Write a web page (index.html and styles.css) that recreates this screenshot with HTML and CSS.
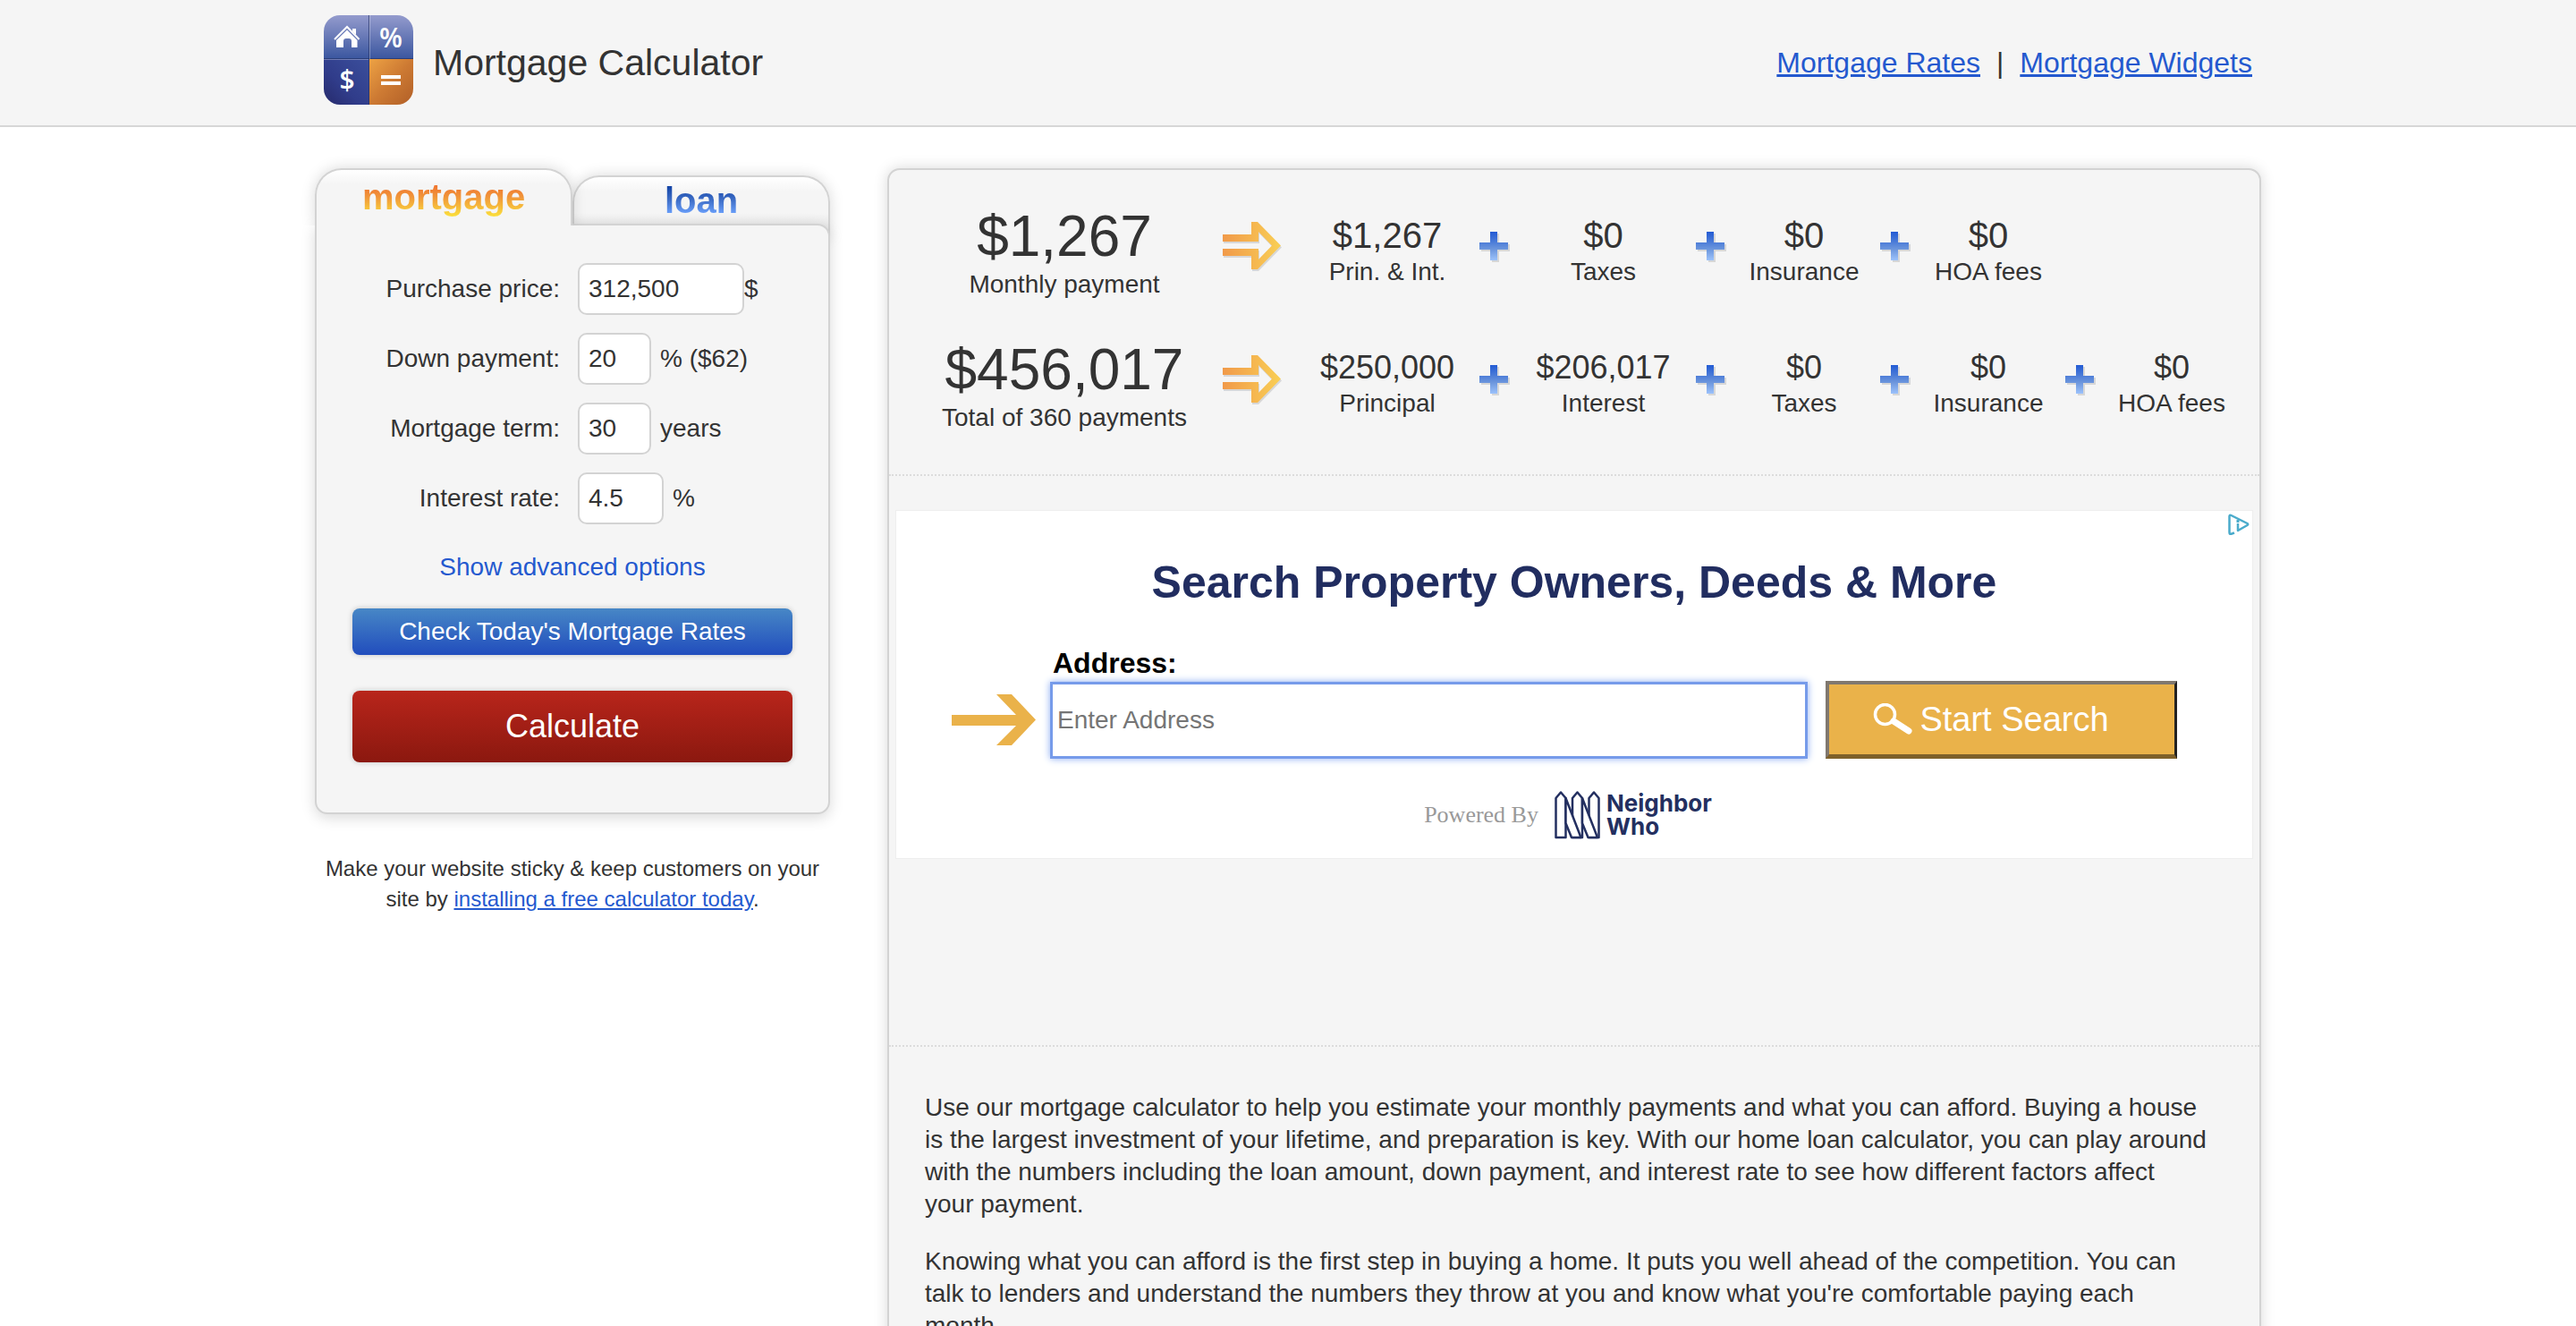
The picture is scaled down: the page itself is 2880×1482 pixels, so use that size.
FILE: index.html
```html
<!DOCTYPE html>
<html lang="en">
<head>
<meta charset="utf-8">
<meta name="viewport" content="width=device-width, initial-scale=1">
<title>Mortgage Calculator</title>
<link rel="stylesheet" href="styles.css">
</head>
<body>
<svg class="sprite" width="0" height="0" aria-hidden="true">
  <defs>
    <linearGradient id="arrow-fill" x1="0" x2="1" y1="0" y2="0">
      <stop offset="0" stop-color="#f19a4a"/><stop offset="1" stop-color="#f9cf55"/>
    </linearGradient>
    <linearGradient id="plus-fill" x1="0" x2="0" y1="0" y2="1">
      <stop offset="0" stop-color="#235bd4"/><stop offset=".35" stop-color="#4a7bd8"/><stop offset=".6" stop-color="#6b95dc"/><stop offset="1" stop-color="#9cc2fb"/>
    </linearGradient>
    <linearGradient id="tile-top" x1="0" x2="0" y1="0" y2="1">
      <stop offset="0" stop-color="#949bcd"/><stop offset="1" stop-color="#3a569f"/>
    </linearGradient>
    <linearGradient id="tile-dark" x1="1" x2="0" y1="0" y2="1">
      <stop offset="0" stop-color="#3b4f9c"/><stop offset=".6" stop-color="#303c8a"/><stop offset="1" stop-color="#262a6b"/>
    </linearGradient>
    <linearGradient id="tile-orange" x1="0" x2="1" y1="0" y2="1">
      <stop offset="0" stop-color="#eda244"/><stop offset=".5" stop-color="#cd7a33"/><stop offset="1" stop-color="#b15f27"/>
    </linearGradient>
    <clipPath id="tile-clip"><rect width="100" height="100" rx="18"/></clipPath>
  </defs>
  <symbol id="arrow" viewBox="0 0 68 56">
    <path d="M0 14H32V0H39L65 26.500 39 53H32V38H0V30H40V42L55 26.500 40 11V22H0Z" fill="#000" opacity=".12" transform="translate(1 2)"/>
    <path d="M0 14H32V0H39L65 26.500 39 53H32V38H0V30H40V42L55 26.500 40 11V22H0Z" fill="url(#arrow-fill)"/>
  </symbol>
  <symbol id="plus" viewBox="0 0 34 36">
    <path d="M12 0H20V12H32V20H20V32H12V20H0V12H12Z" fill="#000" opacity=".12" transform="translate(2 2)"/>
    <path d="M12 0H20V12H32V20H20V32H12V20H0V12H12Z" fill="url(#plus-fill)"/>
  </symbol>
</svg>

<header class="site-header">
  <div class="site-header__inner">
    <a class="brand" href="#">
      <svg class="brand__logo" viewBox="0 0 100 100" aria-hidden="true">
        <g clip-path="url(#tile-clip)">
          <rect width="100" height="49" fill="url(#tile-top)"/>
          <rect y="49" width="51" height="51" fill="url(#tile-dark)"/>
          <rect x="51" y="49" width="49" height="51" fill="url(#tile-orange)"/>
          <path d="M50.500 0V100M0 48.500H100" stroke="#253368" stroke-opacity=".7" fill="none"/>
          <path d="M51.500 0V49M0 49.500H50" stroke="#fff" stroke-opacity=".3" fill="none"/>
        </g>
        <path d="M12 27 26 13 39.500 27" fill="none" stroke="#fff" stroke-width="2"/>
        <path d="M32 15H36V22L32 18Z" fill="#fff"/>
        <path d="M26 16.500 37.500 28V36H31V29a3 3 0 0 0-3-3h-3a3 3 0 0 0-3 3V36H14V28Z" fill="#fff"/>
        <text class="brand__sign" x="75" y="36" text-anchor="middle">%</text>
        <text class="brand__sign" x="26" y="83" text-anchor="middle">$</text>
        <path d="M64 67H86V71H64ZM64 74H86V78H64Z" fill="#fff"/>
      </svg>
      <span>Mortgage Calculator</span>
    </a>
    <nav class="site-nav">
      <a href="#">Mortgage Rates</a>
      <span>|</span>
      <a href="#">Mortgage Widgets</a>
    </nav>
  </div>
</header>

<div class="layout">
  <aside class="sidebar">
    <form class="calculator">
      <div class="tabs">
        <button class="tab tab--active" type="button"><span>mortgage</span></button>
        <button class="tab" type="button"><span>loan</span></button>
      </div>
      <div class="panel">
        <div class="field">
          <label for="price">Purchase price:</label>
          <input class="field__input field__input--wide" id="price" type="text" value="312,500"><span>$</span>
        </div>
        <div class="field">
          <label for="down">Down payment:</label>
          <input class="field__input" id="down" type="text" value="20"><span class="field__unit">% ($62)</span>
        </div>
        <div class="field">
          <label for="term">Mortgage term:</label>
          <input class="field__input" id="term" type="text" value="30"><span class="field__unit">years</span>
        </div>
        <div class="field">
          <label for="rate">Interest rate:</label>
          <input class="field__input field__input--rate" id="rate" type="text" value="4.5"><span class="field__unit">%</span>
        </div>
        <a class="advanced" href="#">Show advanced options</a>
        <button class="btn btn--rates" type="button">Check Today's Mortgage Rates</button>
        <button class="btn btn--calculate" type="button">Calculate</button>
      </div>
    </form>
    <p class="widget-note">Make your website sticky &amp; keep customers on your site by <a href="#">installing a free calculator today</a>.</p>
  </aside>

  <main class="results">
    <section class="summary">
      <div class="summary__row">
        <div class="total"><strong>$1,267</strong><span>Monthly payment</span></div>
        <svg class="icon-arrow"><use href="#arrow"/></svg>
        <div class="part"><strong>$1,267</strong><span>Prin. &amp; Int.</span></div>
        <svg class="icon-plus"><use href="#plus"/></svg>
        <div class="part"><strong>$0</strong><span>Taxes</span></div>
        <svg class="icon-plus"><use href="#plus"/></svg>
        <div class="part"><strong>$0</strong><span>Insurance</span></div>
        <svg class="icon-plus"><use href="#plus"/></svg>
        <div class="part"><strong>$0</strong><span>HOA fees</span></div>
      </div>
      <div class="summary__row summary__row--lifetime">
        <div class="total"><strong>$456,017</strong><span>Total of 360 payments</span></div>
        <svg class="icon-arrow"><use href="#arrow"/></svg>
        <div class="part"><strong>$250,000</strong><span>Principal</span></div>
        <svg class="icon-plus"><use href="#plus"/></svg>
        <div class="part"><strong>$206,017</strong><span>Interest</span></div>
        <svg class="icon-plus"><use href="#plus"/></svg>
        <div class="part"><strong>$0</strong><span>Taxes</span></div>
        <svg class="icon-plus"><use href="#plus"/></svg>
        <div class="part"><strong>$0</strong><span>Insurance</span></div>
        <svg class="icon-plus"><use href="#plus"/></svg>
        <div class="part"><strong>$0</strong><span>HOA fees</span></div>
      </div>
    </section>

    <section class="promo">
      <form class="ad">
        <svg class="ad__choices" viewBox="0 0 24 24" aria-hidden="true">
          <path d="M7 21.500 3 23Q1.500 23 1.500 21V3Q1.500 1 3.500 2L21.500 11Q23 12 21.500 13L11 19V11" fill="none" stroke="#4aabcb" stroke-width="2.500" stroke-linejoin="round"/>
          <path d="M9.500 7H12.500V10H9.500Z" fill="#4aabcb"/>
        </svg>
        <h2 class="ad__title">Search Property Owners, Deeds &amp; More</h2>
        <label class="ad__label" for="address">Address:</label>
        <div class="ad__search">
          <svg class="ad__arrow" viewBox="0 0 94 57" aria-hidden="true"><path d="M0 23H72L50 0H67L94 28.500 67 57H50L72 35H0Z" fill="#eab24a"/></svg>
          <input class="ad__input" id="address" type="text" placeholder="Enter Address">
          <button class="ad__button" type="button">
            <svg viewBox="0 0 44 36" aria-hidden="true"><circle cx="13.500" cy="12.500" r="11" fill="none" stroke="#fff" stroke-width="3.500"/><path d="M23 20 40 31" stroke="#fff" stroke-width="7" stroke-linecap="round"/></svg>
            <span>Start Search</span>
          </button>
        </div>
        <div class="ad__footer">
          <span class="ad__powered">Powered By</span>
          <svg class="ad__mark" viewBox="0 0 52 54" aria-hidden="true">
            <g fill="#fff" stroke="#232f60" stroke-width="2.500" stroke-linejoin="round">
              <path d="M1.500 52V8L7 1.500 12.500 8V52Z"/>
              <path d="M20 52V8L25.500 1.500 31 8V52Z"/>
              <path d="M12.500 8 29.500 52H19L12.500 36Z"/>
              <path d="M38.500 52V8L44 1.500 49.500 8V52Z"/>
              <path d="M31 8 48 52H37.500L31 36Z"/>
            </g>
          </svg>
          <span class="ad__name">Neighbor<br>Who</span>
        </div>
      </form>
    </section>

    <article class="intro">
      <p>Use our mortgage calculator to help you estimate your monthly payments and what you can afford. Buying a house is the largest investment of your lifetime, and preparation is key. With our home loan calculator, you can play around with the numbers including the loan amount, down payment, and interest rate to see how different factors affect your&nbsp;payment.</p>
      <p>Knowing what you can afford is the first step in buying a home. It puts you well ahead of the competition. You can talk to lenders and understand the numbers they throw at you and know what you're comfortable paying each month.</p>
    </article>
  </main>
</div>
</body>
</html>
```
FILE: styles.css
```css
* { box-sizing: border-box; }

body {
  margin: 0;
  background: #fff;
  color: #333;
  font: 28px/36px "Liberation Sans", Arial, Helvetica, sans-serif;
}

a { color: #2459cf; }

input, button { font: inherit; color: inherit; }

.sprite { display: block; }

/* Header */
.site-header {
  background: #f5f5f5;
  border-bottom: 2px solid #d7d7d7;
}

.site-header__inner {
  display: flex;
  align-items: center;
  justify-content: space-between;
  max-width: 2176px;
  height: 140px;
  margin: 0 auto;
  padding: 0 10px 6px;
}

.brand {
  display: flex;
  align-items: center;
  gap: 22px;
  color: #333;
  font-size: 41px;
  line-height: 48px;
  text-decoration: none;
}

.brand span { padding-top: 6px; }

.brand__logo { width: 100px; height: 100px; }

.brand__sign {
  fill: #fff;
  font: 600 30px "Open Sans", sans-serif;
}

.site-nav {
  display: flex;
  gap: 18px;
  padding-top: 6px;
  font-size: 32px;
}

/* Layout */
.layout {
  display: grid;
  grid-template-columns: 576fr 1536fr;
  gap: 64px;
  align-items: start;
  max-width: 2176px;
  margin: 46px auto 0;
}

/* Calculator: the idle tab runs on behind the panel's rounded corner */
.tabs {
  display: grid;
  grid-template-columns: 1fr 1fr;
  align-items: end;
}

.tab {
  height: 70px;
  margin-bottom: -16px;
  padding: 0 0 16px;
  border: 2px solid #d3d3d3;
  border-bottom: 0;
  border-radius: 30px 30px 0 0;
  background: linear-gradient(#fff, #f5f5f5 16px, #f5f5f5 40px, #eaeaea 54px);
  box-shadow: 0 0 16px rgba(0, 0, 0, .15);
  font-size: 40px;
  font-weight: bold;
  line-height: 48px;
}

.tab span {
  display: block;
  background: linear-gradient(#1243a5 8px, #3f6fc8 24px, #6da3ff 40px);
  background-clip: text;
  color: transparent;
}

.tab--active {
  position: relative;
  z-index: 2;
  height: 64px;
  margin-bottom: -2px;
  padding: 0 0 2px;
  background: linear-gradient(#fff, #f5f5f5 16px);
  clip-path: inset(-24px -24px 0 -24px);
}

.tab--active span {
  background: linear-gradient(#f06c2c 8px, #f0953a 24px, #fbe03c 46px);
  background-clip: text;
}

.panel {
  position: relative;
  z-index: 1;
  padding: 42px 40px 56px;
  border: 2px solid #d3d3d3;
  border-radius: 0 14px 14px 14px;
  background: #f5f5f5;
  box-shadow: 0 4px 16px rgba(0, 0, 0, .15);
}

.field {
  display: grid;
  grid-template-columns: 232px auto 1fr;
  align-items: center;
  margin-bottom: 20px;
}

.field label { text-align: right; }

.field__input {
  width: 82px;
  height: 58px;
  margin-left: 20px;
  padding: 0 10px;
  border: 2px solid #d3d3d3;
  border-radius: 10px;
  background: #fff;
}

.field__input--wide { width: 186px; }
.field__input--rate { width: 96px; }
.field__unit { padding-left: 10px; }

.advanced {
  display: block;
  margin: 30px 0 28px;
  text-align: center;
  text-decoration: none;
}

.btn {
  display: block;
  width: 100%;
  padding: 0;
  border: 0;
  border-radius: 8px;
  box-shadow: 0 0 6px rgba(0, 0, 0, .2);
  color: #fff;
}

.btn--rates {
  height: 52px;
  background: linear-gradient(#4787c6, #214dbd);
}

.btn--calculate {
  height: 80px;
  margin-top: 40px;
  background: linear-gradient(#b8251b, #8b180f);
  font-size: 36px;
}

.widget-note {
  margin: 44px 10px;
  font-size: 24px;
  line-height: 34px;
  text-align: center;
}

/* Results */
.results {
  border: 2px solid #d3d3d3;
  border-radius: 14px;
  background: #f5f5f5;
  box-shadow: 0 0 16px rgba(0, 0, 0, .15);
}

.summary {
  padding: 42px 30px 0 54px;
  border-bottom: 2px dotted #dcdcdc;
}

.summary__row {
  display: grid;
  grid-template-columns: 284fr 138fr 162fr 78fr 165fr 75fr 134fr 70fr 138fr 68fr 136fr;
  justify-items: center;
  align-items: start;
  min-height: 149px;
}

.total, .part {
  display: flex;
  flex-direction: column;
  align-items: center;
  white-space: nowrap;
}

.total strong, .part strong { font-weight: normal; }

.total strong {
  margin-bottom: 4px;
  font-size: 64px;
  line-height: 64px;
}

.part { padding-top: 8px; }

.part strong {
  font-size: 40px;
  line-height: 46px;
}

.summary__row--lifetime .part strong {
  font-size: 36px;
  line-height: 44px;
}

.icon-arrow {
  width: 68px;
  height: 56px;
  margin-top: 16px;
}

.icon-plus {
  width: 34px;
  height: 36px;
  margin-top: 27px;
}

/* Advertisement */
.promo {
  min-height: 638px;
  padding: 38px 7px;
  border-bottom: 2px dotted #dcdcdc;
}

.ad {
  position: relative;
  min-height: 390px;
  padding: 50px 84px 0 62px;
  border: 1px solid #eee;
  background: #fff;
}

.ad__choices {
  position: absolute;
  top: 3px;
  right: 3px;
  width: 24px;
  height: 24px;
}

.ad__title {
  margin: 0 -84px 40px -62px;
  color: #212d60;
  font-size: 50px;
  line-height: 60px;
  text-align: center;
}

.ad__label {
  display: block;
  margin-left: 113px;
  color: #000;
  font-size: 32px;
  font-weight: bold;
  line-height: 40px;
}

.ad__search {
  display: flex;
  align-items: center;
}

.ad__arrow { width: 94px; height: 57px; margin-right: 16px; }

.ad__input {
  flex: 1;
  min-width: 0;
  height: 86px;
  padding: 0 5px;
  border: 3px solid #769bea;
  background: #fff;
  box-shadow: 0 0 8px #8aabf2;
}

.ad__input::placeholder { color: #757575; opacity: 1; }

.ad__button {
  display: flex;
  align-items: center;
  justify-content: center;
  gap: 8px;
  width: 393px;
  height: 87px;
  margin-left: 20px;
  padding: 0 24px 0 0;
  border: solid;
  border-width: 4px 3px 5px 4px;
  border-color: #80786f #222 #7f612a #80786f;
  background: #eab24a;
  color: #fff;
  font-size: 38px;
}

.ad__button svg { width: 44px; height: 36px; }

.ad__footer {
  display: flex;
  align-items: center;
  justify-content: center;
  margin: 36px -8px 0 0;
}

.ad__powered {
  margin-right: 18px;
  color: #999;
  font: 26px/32px "Liberation Serif", "Times New Roman", serif;
}

.ad__mark { width: 52px; height: 54px; margin-right: 6px; }

.ad__name {
  color: #232f60;
  font: bold 26px/26px Inter, sans-serif;
}

/* Copy */
.intro { padding: 50px 52px 48px 40px; }

.intro p { margin: 0 0 28px; }
```
